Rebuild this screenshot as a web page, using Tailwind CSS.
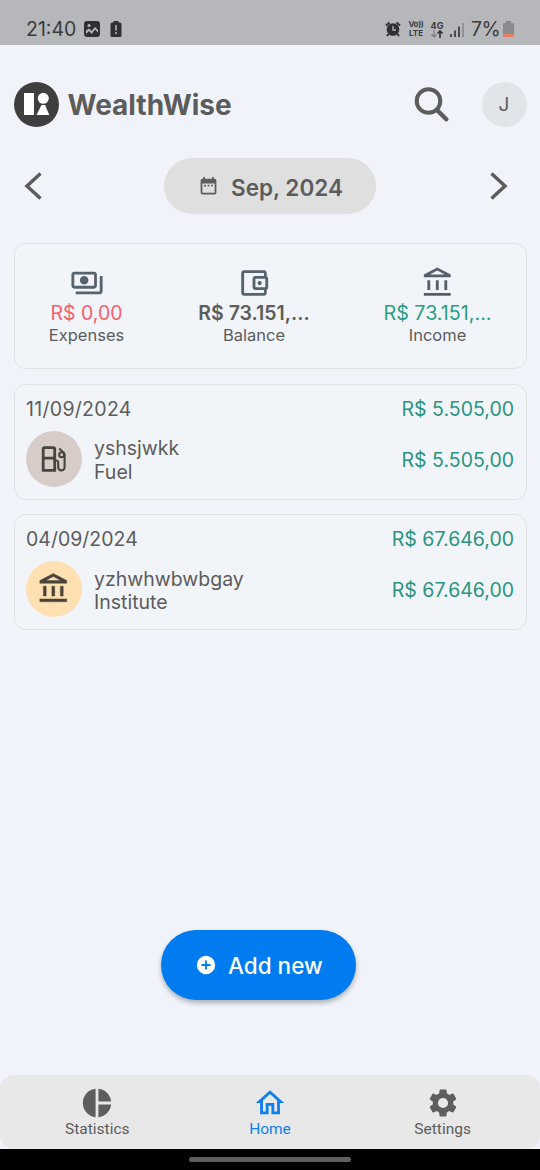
<!DOCTYPE html>
<html lang="en">

<head>
    <meta charset="UTF-8">
    <meta name="viewport" content="width=device-width, initial-scale=1.0">
    <script src="https://cdn.jsdelivr.net/npm/@tailwindcss/browser@4"></script>
    <title>WealthWise</title>
</head>

<body class="bg-[#f0f4fa] font-['Inter',sans-serif] text-[#5c5c5c]">
    <div class="flex flex-col w-[540px] h-[1170px] overflow-hidden">
        <!-- Status bar -->
        <div class="h-[45px] shrink-0 bg-[#b5b7bb] text-[#3a3b3e] flex items-start justify-between pt-[19px] pl-[26px] pr-[26px]">
            <div class="flex items-center h-5">
                <span class="text-[19.5px] leading-5 w-[50px] whitespace-nowrap">21:40</span>
                <svg class="ml-2 w-4 h-4" viewBox="0 0 16 16">
                    <rect width="16" height="16" rx="3" fill="#2f3033" />
                    <path d="M2 9.500l3-2 2.500 2.500 3.500-4 3 3v2.500l-3-3-3.300 4.500L5 10l-3 3z" fill="#b5b7bb" />
                    <circle cx="5" cy="4.500" r="1.500" fill="#b5b7bb" />
                </svg>
                <svg class="ml-[10px] w-3 h-4" viewBox="0 0 12 16">
                    <path d="M3.500 0h5v1.500H10A1.500 1.500 0 0 1 11.500 3v11.500A1.500 1.500 0 0 1 10 16H2a1.500 1.500 0 0 1-1.500-1.500V3A1.500 1.500 0 0 1 2 1.500h1.500z" fill="#2f3033" />
                    <path d="M6 4v5.500M6 11v2" stroke="#b5b7bb" stroke-width="1.600" />
                </svg>
            </div>
            <div class="flex items-center h-5">
                <svg class="w-4 h-4" viewBox="0 0 16 16">
                    <circle cx="8" cy="8.500" r="6.300" fill="#2f3033" />
                    <path d="M1 4.500l3.500-3M15 4.500l-3.500-3M3.500 13L2 15M12.500 13l1.500 2" stroke="#2f3033" stroke-width="2" />
                    <path d="M8 5v4h3" fill="none" stroke="#b5b7bb" stroke-width="1.300" />
                </svg>
                <div class="ml-[7px] w-4 flex flex-col items-center text-[8px] font-bold whitespace-nowrap">
                    <span class="leading-[9px] tracking-[-0.3px]">Vo))</span>
                    <span class="leading-[9px]">LTE</span>
                </div>
                <div class="ml-[6px] w-[14px] flex flex-col items-center">
                    <span class="text-[9px] leading-[9px] font-bold">4G</span>
                    <svg class="w-3 h-2" viewBox="0 0 12 8" fill="none">
                        <path d="M3 0v7M.5 4.500L3 7l2.500-2.500" stroke="#77797c" stroke-width="1.200" />
                        <path d="M9 8V1M6.500 3.500L9 1l2.500 2.500" stroke="#2f3033" stroke-width="1.600" />
                    </svg>
                </div>
                <svg class="ml-[6px] w-[14px] h-[15px]" viewBox="0 0 14 15">
                    <path d="M1 12v3M5 8.500V15M9 4.500V15" stroke="#3a3b3e" stroke-width="1.700" />
                    <path d="M13 1v14" stroke="#85878a" stroke-width="1.500" />
                </svg>
                <span class="ml-[7px] w-[29px] text-[19.500px] leading-5 whitespace-nowrap tracking-[-0.5px]">7%</span>
                <svg class="ml-[3px] w-[11px] h-4" viewBox="0 0 11 16">
                    <path d="M3 0h5v2h1.500A1.500 1.500 0 0 1 11 3.500V15a1 1 0 0 1-1 1H1a1 1 0 0 1-1-1V3.500A1.500 1.500 0 0 1 1.500 2H3z" fill="#898b8e" />
                    <path d="M0 13h11v2a1 1 0 0 1-1 1H1a1 1 0 0 1-1-1z" fill="#e58060" />
                </svg>
            </div>
        </div>

        <!-- Header -->
        <header class="flex items-center h-[45px] mt-[37px] pl-[13.500px] pr-[13.500px] shrink-0">
            <svg class="w-[45px] h-[45px]" viewBox="0 0 45 45">
                <circle cx="22.500" cy="22.500" r="22.500" fill="#3f3f3f" />
                <rect x="10" y="11" width="10" height="22" fill="#fff" />
                <circle cx="29.300" cy="16.300" r="5.500" fill="#fff" />
                <path d="M27.500 23h3.600l4.200 10H22.500z" fill="#fff" />
            </svg>
            <h1 class="ml-[9px] mt-px text-[28px] font-bold leading-none">WealthWise</h1>
            <svg class="ml-auto w-[35px] h-[35px]" viewBox="0 0 35 35" fill="none" stroke="#5c5c5c">
                <circle cx="14.500" cy="14" r="11.800" stroke-width="4" />
                <path d="M23 23l9.300 9.300" stroke-width="4.400" stroke-linecap="round" />
            </svg>
            <div class="ml-[33px] w-[45px] h-[45px] rounded-full bg-[#e1e4e9] flex items-center justify-center text-[19px] pt-[2px]">J</div>
        </header>

        <!-- Month selector -->
        <div class="flex items-center h-14 mt-[31px] pl-6 pr-8 shrink-0">
            <svg class="w-[18px] h-[28px]" viewBox="0 0 18 28">
                <path d="M16.500 1.500L3 14l13.500 12.500" fill="none" stroke="#5c5c5c" stroke-width="3.500" />
            </svg>
            <div class="flex items-center w-[212px] h-14 ml-[122px] rounded-full bg-[#dfdfdf] pl-[34px]">
                <svg class="w-[21px] h-[21px]" viewBox="0 0 24 24" fill="#5c5c5c">
                    <path d="M19 3h-1V1h-2v2H8V1H6v2H5a2 2 0 0 0-2 2v14a2 2 0 0 0 2 2h14a2 2 0 0 0 2-2V5a2 2 0 0 0-2-2m0 16H5V8.500h14zM7 10h2v2H7zm4 0h2v2h-2zm4 0h2v2h-2z" />
                </svg>
                <span class="ml-[12px] mt-[3px] text-[22.500px] font-semibold whitespace-nowrap">Sep, 2024</span>
            </div>
            <svg class="ml-auto w-[18px] h-[28px]" viewBox="0 0 18 28">
                <path d="M1.500 1.500L15 14L1.500 26.500" fill="none" stroke="#5c5c5c" stroke-width="3.500" />
            </svg>
        </div>

        <main class="flex flex-col gap-[14.500px] mt-[29px] px-[13.500px]">
            <!-- Summary -->
            <section class="flex justify-between h-[126px] px-[34px] pt-[22px] rounded-xl border-[1.500px] border-[#dfe1e5] bg-[#f1f4f9] whitespace-nowrap">
                <div class="flex flex-col items-center w-[76px]">
                    <svg class="w-[34px] h-[34px]" viewBox="0 0 24 24" fill="#56636d">
                        <path d="M19 14V6c0-1.100-.9-2-2-2H3c-1.100 0-2 .9-2 2v8c0 1.100.9 2 2 2h14c1.100 0 2-.9 2-2zm-2 0H3V6h14v8zm-7-7c-1.660 0-3 1.340-3 3s1.340 3 3 3 3-1.340 3-3-1.340-3-3-3zm13 0v11c0 1.100-.9 2-2 2H4v-2h17V7h2z" />
                    </svg>
                    <span class="mt-px text-[19.500px] leading-[24px] text-[#f4606c]">R$ 0,00</span>
                    <span class="text-[16.500px] leading-5">Expenses</span>
                </div>
                <div class="flex flex-col items-center w-[110px]">
                    <svg class="w-[34px] h-[34px]" viewBox="0 0 24 24" fill="#56636d">
                        <path d="M21 7.280V5c0-1.100-.9-2-2-2H5c-1.110 0-2 .9-2 2v14c0 1.100.89 2 2 2h14c1.100 0 2-.9 2-2v-2.280c.59-.35 1-.98 1-1.720V9c0-.74-.41-1.370-1-1.720zM20 9v6h-7V9h7zM5 19V5h14v2h-6c-1.100 0-2 .9-2 2v6c0 1.100.9 2 2 2h6v2H5z" />
                        <circle cx="16" cy="12" r="1.500" />
                    </svg>
                    <span class="mt-px text-[19.500px] leading-[24px] font-semibold">R$ 73.151,...</span>
                    <span class="text-[16.500px] leading-5">Balance</span>
                </div>
                <div class="flex flex-col items-center w-[108px]">
                    <svg class="w-[34px] h-[34px]" viewBox="0 0 24 24" fill="#56606d">
                        <path d="M6.500 10h-2v7h2zm6 0h-2v7h2zM21 19H2v2h19zm-2.500-9h-2v7h2zm-7-6.740L16.710 6H6.290zM11.500 1L2 6v2h19V6z" />
                    </svg>
                    <span class="mt-px text-[19.700px] leading-[24px] text-[#2a9d84]">R$ 73.151,...</span>
                    <span class="text-[16.500px] leading-5">Income</span>
                </div>
            </section>

            <!-- Transactions -->
            <section class="h-[116px] rounded-xl border-[1.500px] border-[#dfe1e5] bg-[#f1f4f9] px-[11.500px] pt-3 text-[19.500px] leading-6">
                <div class="flex justify-between">
                    <span class="tracking-[0.3px]">11/09/2024</span>
                    <span class="text-[#2b9480]">R$ 5.505,00</span>
                </div>
                <div class="flex items-center h-14 mt-[10px]">
                    <div class="w-14 h-14 rounded-full bg-[#d7ccc8] flex items-center justify-center">
                        <svg class="w-[28px] h-[28px]" viewBox="0 0 28 28" fill="none" stroke="#484440" stroke-width="2.800">
                            <path d="M4.200 2.700h9.300a1.200 1.200 0 0 1 1.200 1.200v21.400H3.200V3.700a1 1 0 0 1 1-1zM3.200 13.200h11.500" />
                            <path d="M14.700 15.500h1.500a2 2 0 0 1 2 2v4.700a3 3 0 0 0 6.400 0V10a3.500 3.500 0 0 0-1.200-2.600l-4.200-3.900" stroke-width="2.100" />
                            <circle cx="21.700" cy="9.800" r="2.500" stroke-width="2.100" />
                        </svg>
                    </div>
                    <div class="ml-3 mt-1 leading-[23.500px]">
                        <div>yshsjwkk</div>
                        <div>Fuel</div>
                    </div>
                    <span class="ml-auto mt-[2px] text-[#2b9480]">R$ 5.505,00</span>
                </div>
            </section>

            <section class="h-[116px] rounded-xl border-[1.500px] border-[#dfe1e5] bg-[#f1f4f9] px-[11.500px] pt-3 text-[19.500px] leading-6">
                <div class="flex justify-between">
                    <span>04/09/2024</span>
                    <span class="text-[#2b9480]">R$ 67.646,00</span>
                </div>
                <div class="flex items-center h-14 mt-[10px]">
                    <div class="w-14 h-14 rounded-full bg-[#ffe0b2] flex items-center justify-center">
                        <svg class="w-[34px] h-[34px]" viewBox="0 0 24 24" fill="#4b443b" stroke="#4b443b" stroke-width="0.300">
                            <path d="M6.500 10h-2v7h2zm6 0h-2v7h2zM21 19H2v2h19zm-2.500-9h-2v7h2zm-7-6.740L16.710 6H6.290zM11.500 1L2 6v2h19V6z" />
                        </svg>
                    </div>
                    <div class="ml-3 mt-1 leading-[23.500px]">
                        <div>yzhwhwbwbgay</div>
                        <div>Institute</div>
                    </div>
                    <span class="ml-auto mt-px text-[#2b9480]">R$ 67.646,00</span>
                </div>
            </section>
        </main>

        <!-- Add button -->
        <button class="mt-auto mb-[75px] ml-[161px] w-[195px] h-[70px] shrink-0 rounded-full bg-[#007bf0] text-white flex items-center pl-[34px] shadow-[0_3px_5px_rgba(0,0,0,0.28)]">
            <svg class="w-[22px] h-[22px]" viewBox="0 0 24 24" fill="#fff">
                <path d="M12 2a10 10 0 1 0 0 20 10 10 0 0 0 0-20zm5 11h-4v4h-2v-4H7v-2h4V7h2v4h4z" />
            </svg>
            <span class="ml-[11px] mt-[2px] text-[22.500px] font-medium whitespace-nowrap">Add new</span>
        </button>

        <!-- Tab bar -->
        <nav class="h-[74px] shrink-0 grid grid-cols-3 px-[11px] rounded-[14px] bg-[#e8e8e8] font-['Roboto',sans-serif] text-[15.500px] leading-[18px]">
            <div class="flex flex-col items-center pt-[10.500px]">
                <svg class="w-[34px] h-[34px]" viewBox="0 0 24 24" fill="#5e5e5e">
                    <path d="M11 2v20C5.900 21.500 2 17.200 2 12S5.900 2.500 11 2m2 0v9h9c-.5-4.800-4.200-8.500-9-9m0 11v9c4.700-.5 8.500-4.200 9-9z" />
                </svg>
                <span>Statistics</span>
            </div>
            <div class="flex flex-col items-center pt-[10.500px] text-[#0f7fee]">
                <svg class="w-[34px] h-[34px]" viewBox="0 0 24 24" fill="currentColor">
                    <path d="M12 5.690l5 4.500V18h-2v-6H9v6H7v-7.810zM12 3L2 12h3v8h6v-6h2v6h6v-8h3z" />
                </svg>
                <span>Home</span>
            </div>
            <div class="flex flex-col items-center pt-[10.500px]">
                <svg class="w-[34px] h-[34px]" viewBox="0 0 24 24" fill="#5e5e5e">
                    <path d="M19.140 12.940c.04-.3.060-.61.060-.94 0-.32-.02-.64-.07-.94l2.030-1.580c.18-.14.23-.41.12-.61l-1.920-3.320c-.12-.22-.37-.29-.59-.22l-2.390.96c-.5-.38-1.030-.7-1.620-.94l-.36-2.540c-.04-.24-.24-.41-.48-.41h-3.840c-.24 0-.43.17-.47.41l-.36 2.540c-.59.24-1.130.57-1.620.94l-2.390-.96c-.22-.08-.47 0-.59.22L2.740 8.870c-.12.21-.08.47.12.61l2.030 1.580c-.05.3-.09.63-.09.94s.02.64.07.94l-2.030 1.580c-.18.14-.23.41-.12.61l1.920 3.320c.12.22.37.29.59.22l2.390-.96c.5.38 1.030.7 1.620.94l.36 2.540c.05.24.24.41.48.41h3.840c.24 0 .44-.17.47-.41l.36-2.540c.59-.24 1.130-.56 1.620-.94l2.390.96c.22.08.47 0 .59-.22l1.920-3.320c.12-.22.07-.47-.12-.61zM12 15.600a3.600 3.600 0 1 1 0-7.200 3.600 3.600 0 0 1 0 7.200z" />
                </svg>
                <span>Settings</span>
            </div>
        </nav>

        <!-- Gesture bar -->
        <div class="h-[21px] shrink-0 bg-black flex justify-center pt-2">
            <div class="w-[162px] h-[5px] rounded-full bg-[#5f5f5f]"></div>
        </div>
    </div>
</body>

</html>
